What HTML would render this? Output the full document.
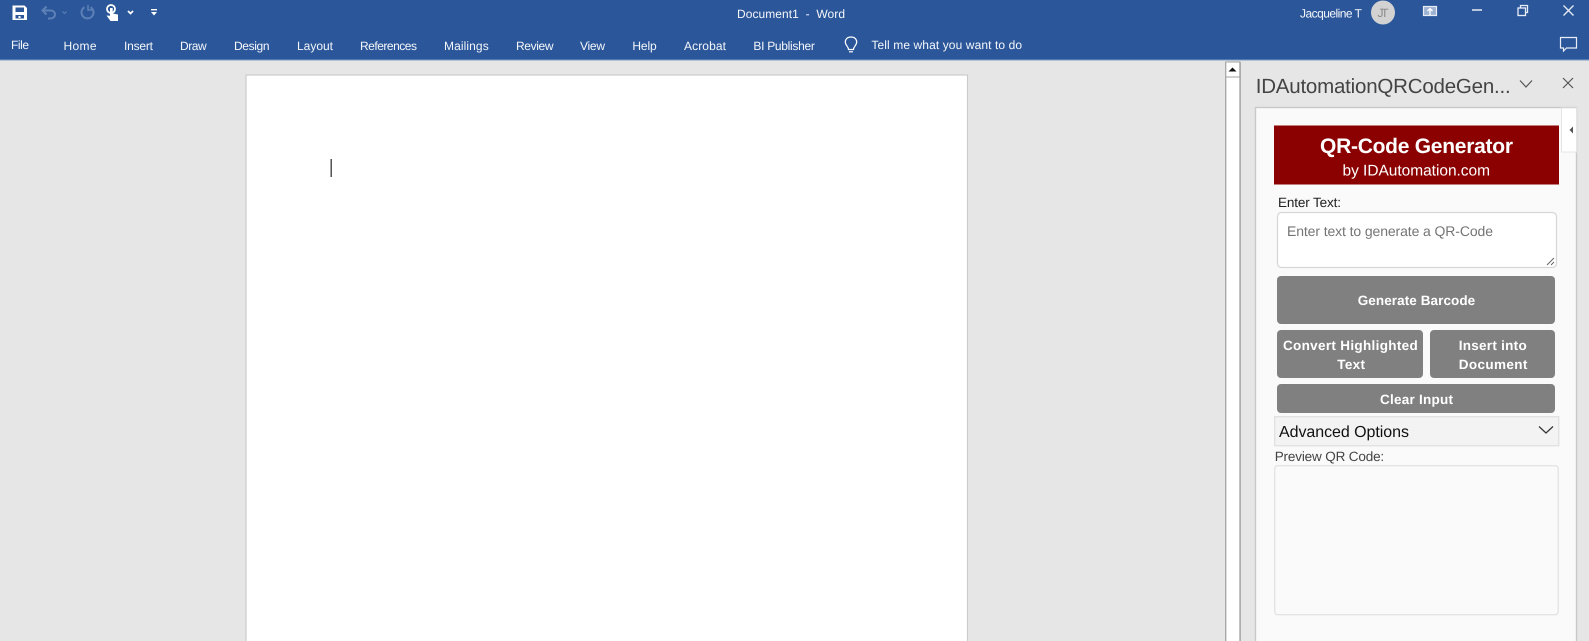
<!DOCTYPE html>
<html lang="en"><head><meta charset="utf-8"><title>Document1 - Word</title>
<style>
html,body{margin:0;padding:0;width:1589px;height:641px;overflow:hidden;background:#e6e6e6}
svg{display:block;position:absolute;left:0;top:0}
text{font-family:"Liberation Sans",sans-serif;text-rendering:geometricPrecision}
.r{font-size:12px;fill:#f4f6fa}
.b{font-size:13.5px;font-weight:bold;fill:#fff}
</style></head><body>
<svg width="1589" height="641" viewBox="0 0 1589 641" xmlns="http://www.w3.org/2000/svg">
<rect width="1589" height="641" fill="#e6e6e6"/>
<rect width="1589" height="60" fill="#2b579a"/>
<rect y="59.5" width="1589" height="1" fill="#7f9cc6"/>

<!-- quick access -->
<path d="M12.5 5.5H24.5L27 8V20H12.5ZM15.5 7.5V12H24V7.5ZM15.5 15V18.5H24V15Z" fill="#fff" fill-rule="evenodd"/>
<rect x="18.5" y="16" width="2" height="2" fill="#fff"/>
<g fill="none" stroke="#5d80b6" stroke-width="2">
<path d="M43 10.5H50.5C53.5 10.5 55 12.5 55 14.5C55 16.8 53 18.5 50.5 18.5H48"/>
<path d="M46.5 6.5L42.5 10.5L46.5 14.5"/>
<path d="M62.5 11.5L64.5 13.5L66.5 11.5" stroke-width="1"/>
<path d="M84.5 7.2A6 6 0 1 0 90.5 7.2"/>
<path d="M88 5V10H93" stroke-width="1.6"/>
</g>
<g>
<circle cx="111" cy="9" r="4" fill="none" stroke="#fff" stroke-width="1.8"/>
<path d="M110 8H112.7V13.5L118 14.5V21H110.5L106.5 15.5L110 15.8Z" fill="#fff"/>
<path d="M128 11L130.5 13.5L133 11" fill="none" stroke="#fff" stroke-width="1.7"/>
<rect x="151" y="9" width="6" height="1.4" fill="#fff"/>
<path d="M151 12H157L154 15.5Z" fill="#fff"/>
</g>

<text class="r" x="737" y="18" textLength="108">Document1 &#160;-&#160; Word</text>

<!-- tabs -->
<text class="r" x="11" y="49" textLength="18">File</text>
<text class="r" x="63.5" y="50" textLength="33">Home</text>
<text class="r" x="124" y="50" textLength="29">Insert</text>
<text class="r" x="180" y="50" textLength="26.7">Draw</text>
<text class="r" x="234" y="50" textLength="35.5">Design</text>
<text class="r" x="297" y="50" textLength="36">Layout</text>
<text class="r" x="360" y="50" textLength="57">References</text>
<text class="r" x="444" y="50" textLength="44.7">Mailings</text>
<text class="r" x="516" y="50" textLength="37.5">Review</text>
<text class="r" x="580" y="50" textLength="25">View</text>
<text class="r" x="632.4" y="50" textLength="24.3">Help</text>
<text class="r" x="684" y="50" textLength="42">Acrobat</text>
<text class="r" x="753.4" y="50" textLength="61.5">BI Publisher</text>
<g fill="none" stroke="#fff" stroke-width="1.2">
<path d="M848.5 49.5C848.5 46.5 845.3 45.5 845.3 42C845.3 38.8 847.8 37 851 37C854.2 37 856.7 38.8 856.7 42C856.7 45.5 853.5 46.5 853.5 49.5Z"/>
<path d="M849 51.8H853"/>
</g>
<text class="r" x="871.4" y="49" textLength="150.7">Tell me what you want to do</text>

<!-- right of title bar -->
<text class="r" x="1300" y="17.5" textLength="62">Jacqueline T</text>
<circle cx="1383" cy="12.5" r="12" fill="#d2d2d2"/>
<text x="1377.5" y="17" font-size="12" fill="#8a8a8a" textLength="11">JT</text>
<g fill="none" stroke="#e8edf5">
<rect x="1423.5" y="6.5" width="13" height="9" stroke-width="1.2" fill="#9db2d2"/>
<path d="M1430 15V9M1427.5 11L1430 8.5L1432.5 11" stroke="#fff" stroke-width="1.3"/>
<path d="M1472 10H1482" stroke-width="1.5"/>
<rect x="1518" y="8" width="7.5" height="7.5" stroke-width="1.3"/>
<path d="M1520.5 7.5V5.5H1527.5V12.5H1526" stroke-width="1.3"/>
<path d="M1563.5 5.5L1573.5 15.5M1573.5 5.5L1563.5 15.5" stroke-width="1.3"/>
<path d="M1560.5 37.5H1576.5V48H1566.5L1563.5 51V48H1560.5Z" stroke-width="1.2"/>
</g>

<!-- document page -->
<rect x="246" y="75" width="721.5" height="580" fill="#fff" stroke="#cbcbcb" stroke-width="1.2"/>
<rect x="330.5" y="159" width="1.4" height="18" fill="#444"/>

<!-- scrollbar -->
<rect x="1226" y="62" width="14" height="579" fill="#fff"/>
<rect x="1225.3" y="62" width="1" height="579" fill="#8f8f8f"/>
<rect x="1239.3" y="62" width="1.6" height="579" fill="#a8a8a8"/>
<rect x="1225.8" y="62" width="14" height="15" fill="#fff" stroke="#a0a0a0"/>
<path d="M1228.5 71.5H1236.5L1232.5 67.5Z" fill="#111"/>

<!-- task pane -->
<text x="1255.7" y="93" font-size="20.5" fill="#444" textLength="255">IDAutomationQRCodeGen...</text>
<path d="M1520 80.5L1526 87L1532 80.5" fill="none" stroke="#555" stroke-width="1.2"/>
<path d="M1563 78L1573 88M1573 78L1563 88" fill="none" stroke="#555" stroke-width="1.2"/>

<rect x="1255.5" y="107.5" width="321" height="540" fill="#fafafa" stroke="#c9c9c9" stroke-width="1.4"/>
<rect x="1561.5" y="108" width="15" height="44" fill="#fff" stroke="#e4e4e4"/>
<path d="M1573 126.5V133.5L1569.5 130Z" fill="#555"/>

<rect x="1274" y="125.5" width="285" height="59" fill="#8b0000"/>
<text x="1320" y="153" font-size="21" font-weight="bold" fill="#fff" textLength="193">QR-Code Generator</text>
<text x="1342.5" y="175.5" font-size="15.5" fill="#fff" textLength="147.5">by IDAutomation.com</text>

<text x="1278" y="207" font-size="13.5" fill="#222" textLength="63">Enter Text:</text>
<rect x="1277.5" y="212.5" width="279" height="55" rx="4" fill="#fff" stroke="#d6d6d6" stroke-width="1.2"/>
<text x="1287" y="236" font-size="14" fill="#757575" textLength="206">Enter text to generate a QR-Code</text>
<path d="M1547 265L1554 258M1551 265L1554 262" stroke="#666" stroke-width="1" fill="none"/>

<rect x="1277" y="276" width="278" height="48" rx="4" fill="#808080"/>
<text class="b" x="1357.7" y="305" textLength="117.5">Generate Barcode</text>
<rect x="1277" y="330" width="146" height="48" rx="4" fill="#808080"/>
<text class="b" x="1283" y="350" textLength="134.7">Convert Highlighted</text>
<text class="b" x="1337.3" y="369" textLength="27.7">Text</text>
<rect x="1430" y="330" width="125" height="48" rx="4" fill="#808080"/>
<text class="b" x="1458.7" y="350" textLength="68">Insert into</text>
<text class="b" x="1458.7" y="369" textLength="68.7">Document</text>
<rect x="1277" y="384" width="278" height="29" rx="4" fill="#808080"/>
<text class="b" x="1380" y="404" textLength="73">Clear Input</text>

<rect x="1274.7" y="416.7" width="284" height="29" fill="#f3f3f3" stroke="#e2e2e2" stroke-width="1.4"/>
<text x="1279" y="437" font-size="16" fill="#111" textLength="130">Advanced Options</text>
<path d="M1539 426.5L1546 433L1553 426.5" fill="none" stroke="#333" stroke-width="1.2"/>

<text x="1274.7" y="461" font-size="13.5" fill="#444" textLength="109.5">Preview QR Code:</text>
<rect x="1274.7" y="465.7" width="283.5" height="149" rx="3" fill="#fafafa" stroke="#e4e4e4" stroke-width="1.4"/>
</svg>
</body></html>
